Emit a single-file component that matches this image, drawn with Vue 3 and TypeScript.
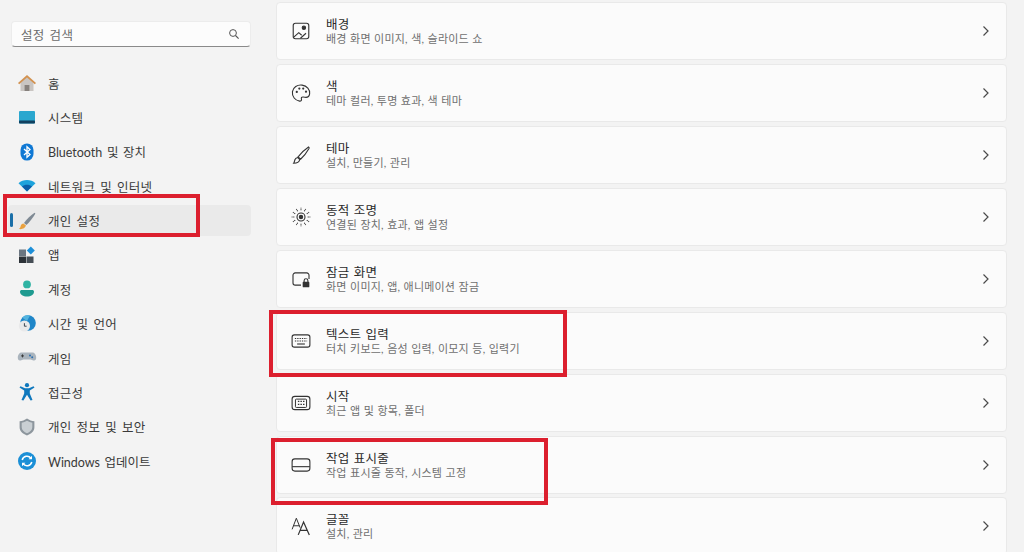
<script setup lang="ts">
interface NavItem { label: string; icon: string; active?: boolean; latin?: boolean }
interface CardItem { title: string; sub: string; icon: string }

const navItems: NavItem[] = [
  { label: '홈', icon: 'home' },
  { label: '시스템', icon: 'system' },
  { label: 'Bluetooth 및 장치', icon: 'bluetooth', latin: true },
  { label: '네트워크 및 인터넷', icon: 'wifi' },
  { label: '개인 설정', icon: 'brush', active: true },
  { label: '앱', icon: 'apps' },
  { label: '계정', icon: 'account' },
  { label: '시간 및 언어', icon: 'time' },
  { label: '게임', icon: 'game' },
  { label: '접근성', icon: 'access' },
  { label: '개인 정보 및 보안', icon: 'shield' },
  { label: 'Windows 업데이트', icon: 'update', latin: true }
]

const cards: CardItem[] = [
  { title: '배경', sub: '배경 화면 이미지, 색, 슬라이드 쇼', icon: 'picture' },
  { title: '색', sub: '테마 컬러, 투명 효과, 색 테마', icon: 'palette' },
  { title: '테마', sub: '설치, 만들기, 관리', icon: 'pen' },
  { title: '동적 조명', sub: '연결된 장치, 효과, 앱 설정', icon: 'light' },
  { title: '잠금 화면', sub: '화면 이미지, 앱, 애니메이션 잠금', icon: 'lock' },
  { title: '텍스트 입력', sub: '터치 키보드, 음성 입력, 이모지 등, 입력기', icon: 'keyboard' },
  { title: '시작', sub: '최근 앱 및 항목, 폴더', icon: 'start' },
  { title: '작업 표시줄', sub: '작업 표시줄 동작, 시스템 고정', icon: 'taskbar' },
  { title: '글꼴', sub: '설치, 관리', icon: 'font' }
]

const rays = Array.from({ length: 12 }, (_, i) => (i * Math.PI) / 6)
const rayPath = rays
  .map((a) => `M${(9 + 6 * Math.cos(a)).toFixed(2)} ${(9 + 6 * Math.sin(a)).toFixed(2)}L${(9 + 8.4 * Math.cos(a)).toFixed(2)} ${(9 + 8.4 * Math.sin(a)).toFixed(2)}`)
  .join('')
</script>

<template>
  <div class="page">
    <aside class="sidebar">
      <div class="search">
        <span class="search-text">설정 검색</span>
        <svg class="search-icon" viewBox="0 0 12 12" width="12" height="12">
          <circle cx="5" cy="5" r="3.4" fill="none" stroke="#555" stroke-width="1" />
          <path d="M7.5 7.5L10.6 10.6" stroke="#555" stroke-width="1.1" />
        </svg>
      </div>
      <nav class="nav">
        <div v-for="item in navItems" :key="item.label" class="nav-row" :class="{ active: item.active }">
          <span v-if="item.active" class="indicator"></span>
          <svg class="nav-icon" viewBox="0 0 20 20" width="20" height="20">
            <template v-if="item.icon === 'home'">
              <path d="M3.5 9.5L10 4l6.5 5.5V18h-13z" fill="#c9c5c2" />
              <rect x="7.6" y="12" width="4.8" height="6" fill="#86807c" />
              <path d="M1 10L10 2l9 8-1.2 1.2L10 4.6 2.2 11.2z" fill="#d2914f" />
            </template>
            <template v-else-if="item.icon === 'system'">
              <rect x="2" y="3" width="16" height="12.5" rx="1" fill="#2aa7cf" />
              <rect x="2" y="12.6" width="16" height="3" rx="0.8" fill="#11405f" />
            </template>
            <template v-else-if="item.icon === 'bluetooth'">
              <rect x="3.5" y="1.5" width="13" height="17" rx="6.4" fill="#0f78d4" />
              <path d="M7 7l6 5.6-3 2.7V4.7l3 2.7L7 13" fill="none" stroke="#fff" stroke-width="1.3" />
            </template>
            <template v-else-if="item.icon === 'wifi'">
              <path d="M1.5 7.2C6 3 14 3 18.5 7.2L10 15.5z" fill="#1ea3dc" />
              <path d="M5 10.6C7.8 8.2 12.2 8.2 15 10.6L10 15.5z" fill="#0c5fa8" />
            </template>
            <template v-else-if="item.icon === 'brush'">
              <path d="M17.6 1.8C13.5 4.6 9.5 8.4 7 12l2.4 2C12.8 11 16.2 6.4 18.4 2.6z" fill="#7f8a94" />
              <path d="M6.4 12.4l2.6 2.2C8 17.6 5 18.6 1.8 18c1.6-.9 1.6-2.4 2-3.6.4-1.1 1.4-1.8 2.6-2z" fill="#e9a13f" />
            </template>
            <template v-else-if="item.icon === 'apps'">
              <rect x="2" y="4.5" width="7" height="6.5" fill="#6b7681" />
              <rect x="2" y="11.5" width="7" height="6.5" fill="#2c3238" />
              <rect x="9.5" y="11.5" width="7" height="6.5" fill="#454d55" />
              <path d="M13.8 1.5l4 4-4 4-4-4z" fill="#1d8fd8" />
            </template>
            <template v-else-if="item.icon === 'account'">
              <circle cx="10" cy="5.4" r="3.9" fill="#2fb3a3" />
              <path d="M3 12.6c0-1 .8-1.6 1.8-1.6h10.4c1 0 1.8.6 1.8 1.6 0 3.2-3.2 5-7 5s-7-1.8-7-5z" fill="#1f9b90" />
            </template>
            <template v-else-if="item.icon === 'time'">
              <circle cx="11" cy="9" r="7.8" fill="#1f86c8" />
              <path d="M5 3.6a7.8 7.8 0 0 1 8 -2.2L10 7z" fill="#53b3de" />
              <circle cx="7.4" cy="12" r="5.6" fill="#e9e9ea" />
              <path d="M7.4 9.2V12.2H9.6" fill="none" stroke="#3c4650" stroke-width="1" />
            </template>
            <template v-else-if="item.icon === 'game'">
              <path d="M4.6 4.5h10.8c2.4 0 3.8 2.6 3.8 5.3 0 2.2-1.4 3.2-2.8 2.6l-2.8-.9H6.4l-2.8.9C2.2 13 .8 12 .8 9.800.8 7.100 2.200 4.500 4.600 4.500z" fill="#aab4bd" />
              <path d="M4 7.900h3M5.500 6.400v3" stroke="#333" stroke-width=".9" />
              <circle cx="13" cy="7.500" r="1" fill="#2c6fb0" />
              <circle cx="15.200" cy="9.300" r="1" fill="#2c6fb0" />
            </template>
            <template v-else-if="item.icon === 'access'">
              <circle cx="10" cy="3.200" r="2.100" fill="#0f78bd" />
              <path d="M2.500 5.600l1-1.400L8 6.300h4l4.500-2.100 1 1.400-4.700 3v3l2.700 6.300-1.900.7L10 12.800l-3.600 5.800-1.900-.7 2.700-6.300v-3z" fill="#0f78bd" />
            </template>
            <template v-else-if="item.icon === 'shield'">
              <path d="M10 1.600c2.400 1.700 4.800 2.500 7.400 2.600v6c0 4-3.200 6.700-7.400 8.200-4.200-1.500-7.400-4.200-7.400-8.200v-6C5.200 4.100 7.600 3.300 10 1.600z" fill="#8d969d" />
              <path d="M10 3.800c1.800 1.100 3.500 1.800 5.300 2v4.500c0 2.800-2.400 4.800-5.300 6-2.900-1.200-5.300-3.200-5.300-6V5.800c1.800-.2 3.500-.9 5.300-2z" fill="#c9cfd3" />
            </template>
            <template v-else-if="item.icon === 'update'">
              <circle cx="10" cy="10" r="9" fill="#1b8fd6" />
              <path d="M5.200 9A4.900 4.900 0 0 1 14 7.400M14.800 11A4.900 4.900 0 0 1 6 12.600" fill="none" stroke="#fff" stroke-width="1.500" />
              <path d="M15 4.800v3.400h-3.400zM5 15.200v-3.400h3.400z" fill="#fff" />
            </template>
          </svg>
          <span class="nav-label" :class="{ latin: item.latin }">{{ item.label }}</span>
        </div>
      </nav>
    </aside>

    <main class="content">
      <div v-for="card in cards" :key="card.title" class="card">
        <svg class="card-icon" viewBox="0 0 18 18" width="20" height="20">
          <g fill="none" stroke="#333" stroke-width="1">
            <template v-if="card.icon === 'picture'">
              <rect x="2" y="2" width="14" height="14" rx="2" />
              <path d="M2.500 14.500L7 10.500l2.600 2.300M8.500 15.500l5-4.500" />
              <circle cx="11.600" cy="6" r="1.500" fill="#333" />
            </template>
            <template v-else-if="card.icon === 'palette'">
              <path d="M9 1.800c4.300 0 7.800 3.100 7.800 6.900 0 2.600-1.800 3.600-3.800 3.600h-1.600c-1.200 0-1.800 1-1.300 1.900.6 1.100-.1 2.200-1.400 2.200-3.800 0-7.500-3-7.500-7.500C1.200 5 4.700 1.800 9 1.800z" transform="rotate(8 9 9)" />
              <circle cx="5.200" cy="8" r="1" fill="#333" stroke="none" />
              <circle cx="7.500" cy="5" r="1" fill="#333" stroke="none" />
              <circle cx="11" cy="5" r="1" fill="#333" stroke="none" />
              <circle cx="13.500" cy="7.800" r="1" fill="#333" stroke="none" />
            </template>
            <template v-else-if="card.icon === 'pen'">
              <path d="M15.800 1.800c.5.300.7.800.4 1.400-1.900 3.400-4.700 7-7.600 9.600L6.400 10.700C8.900 7.500 12.400 4 15.800 1.800z" />
              <path d="M6 11.200l1.900 1.900c-.5 2-2.300 3.300-5.500 3.300.8-1 .8-2.100 1.100-3.100.3-1.200 1.300-1.900 2.500-2.100z" />
            </template>
            <template v-else-if="card.icon === 'light'">
              <circle cx="9" cy="9" r="1.500" fill="#333" />
              <circle cx="9" cy="9" r="3.600" />
              <path :d="rayPath" stroke-dasharray="1 .6" />
            </template>
            <template v-else-if="card.icon === 'lock'">
              <path d="M9 14.500H3.800A2 2 0 0 1 1.800 12.500V5.500a2 2 0 0 1 2-2h10.400a2 2 0 0 1 2 2V9" />
              <rect x="10.500" y="11.500" width="6" height="5" rx=".8" fill="#333" stroke="none" />
              <path d="M11.800 11.800V10.500a1.700 1.700 0 0 1 3.400 0v1.300" />
            </template>
            <template v-else-if="card.icon === 'keyboard'">
              <rect x="1" y="3.500" width="16" height="11" rx="2" />
              <path d="M3.500 6.800h11M3.500 9h11" stroke-dasharray="1.200 .9" />
              <path d="M5.500 11.700h7" />
            </template>
            <template v-else-if="card.icon === 'start'">
              <rect x="1" y="3" width="16" height="12" rx="2.500" />
              <rect x="4" y="5.500" width="10" height="7.500" rx=".8" stroke-width=".9" />
              <path d="M6.200 7.600h1.300M8.500 7.600h1.300M10.800 7.600h1.300M6.200 10.300h1.300M8.500 10.300h1.300M10.800 10.300h1.300" stroke-width="1.200" />
            </template>
            <template v-else-if="card.icon === 'taskbar'">
              <rect x="1" y="3.500" width="16" height="11" rx="2.500" />
              <path d="M1 10.500h16" />
            </template>
            <template v-else-if="card.icon === 'font'">
              <path d="M1 12L4.800 2 8.200 10.500M2.200 8.800H7.500" stroke-width=".9" />
              <path d="M6.500 17L11.300 5.500 16.500 17M8.200 13H14.800" stroke-width="1.100" />
            </template>
          </g>
        </svg>
        <div class="card-text">
          <div class="card-title">{{ card.title }}</div>
          <div class="card-sub">{{ card.sub }}</div>
        </div>
        <svg class="chevron" viewBox="0 0 8 12" width="8" height="12">
          <path d="M1.500 1.500L6 6l-4.500 4.500" fill="none" stroke="#4a4a4a" stroke-width="1.200" />
        </svg>
      </div>
    </main>

    <div class="mark mark-nav"></div>
    <div class="mark mark-text"></div>
    <div class="mark mark-taskbar"></div>
  </div>
</template>

<style>
html, body { margin: 0; background: #f3f3f3; }
</style>

<style scoped>
.page {
  position: relative;
  display: flex;
  width: 1024px;
  height: 552px;
  overflow: hidden;
  background: #f3f3f3;
  color: #1f1f1f;
  font-family: Lato, "Noto Sans CJK KR", sans-serif;
}
.sidebar {
  width: 275.500px;
  flex: none;
  padding: 21px 25px 0 11px;
  box-sizing: border-box;
}
.search {
  display: flex;
  align-items: center;
  justify-content: space-between;
  height: 26px;
  padding: 0 10px 0 9px;
  box-sizing: border-box;
  background: #fcfcfc;
  border-radius: 4px;
  border: 1px solid #ececec;
  border-bottom: 1px solid #8a8a8a;
}
.search-text { font-size: 12.500px; color: #6b6b6b; letter-spacing: 0.3px; word-spacing: 1.500px; }
.nav { margin-top: 19px; margin-left: -3px; }
.nav-row {
  position: relative;
  display: flex;
  align-items: center;
  height: 34.360px;
  padding-left: 9px;
  box-sizing: border-box;
  border-radius: 4px;
}
.nav-row.active::before {
  content: "";
  position: absolute;
  inset: 2px 0 2px 0;
  background: #eaeaea;
  border-radius: 4px;
}
.indicator {
  position: absolute;
  left: 2px;
  top: 10px;
  width: 3px;
  height: 14px;
  border-radius: 2px;
  background: #1a6fa8;
}
.nav-icon { position: relative; flex: none; }
.nav-label {
  position: relative;
  margin-left: 11px;
  font-size: 12.500px;
  color: #3a3a3a;
  white-space: nowrap;
  letter-spacing: 0.3px;
  word-spacing: 1.500px;
}
.nav-label.latin { letter-spacing: -0.02px; }
.content {
  flex: none;
  width: 731px;
  display: flex;
  flex-direction: column;
  gap: 3.900px;
  padding-top: 2.300px;
}
.card {
  display: flex;
  align-items: center;
  flex: none;
  height: 58px;
  padding: 0 15.500px 0 14px;
  box-sizing: border-box;
  background: #fbfbfb;
  border: 1px solid #e9e9e9;
  border-radius: 4px;
}
.card-icon { flex: none; }
.card-text { flex: 1; margin-left: 15.500px; line-height: 1; }
.card-title { font-size: 12.500px; color: #2a2a2a; line-height: 15px; letter-spacing: 0.2px; word-spacing: 1px; }
.card-sub { font-size: 11px; color: #6f6f6f; line-height: 13px; letter-spacing: 0.2px; word-spacing: 0.400px; }
.chevron { flex: none; }
.mark {
  position: absolute;
  box-sizing: border-box;
  border: 4px solid #dc1f2e;
}
.mark-nav { left: 3px; top: 194px; width: 197px; height: 43px; }
.mark-text { left: 269px; top: 310px; width: 298px; height: 67px; }
.mark-taskbar { left: 271px; top: 438px; width: 277px; height: 67px; }
</style>
